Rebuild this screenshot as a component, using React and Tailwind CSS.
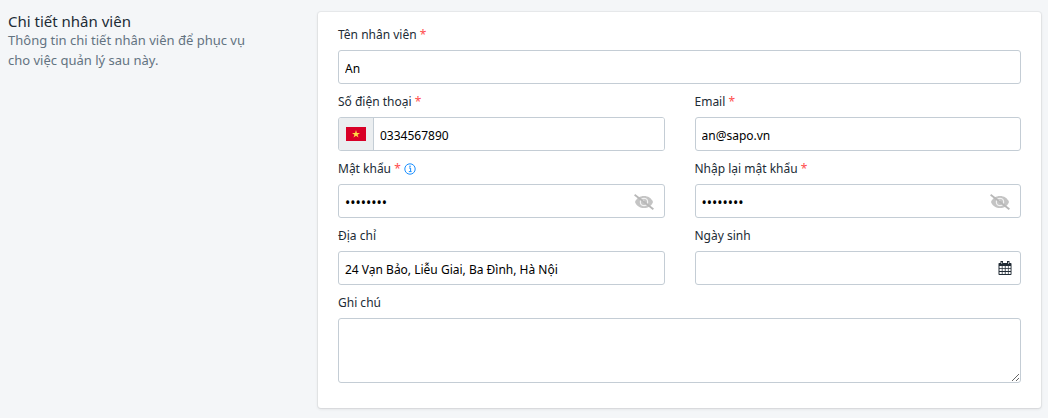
import { useState } from "react";

const inputClass =
  "block w-full h-[34px] rounded-[3px] border border-[#c4cdd5] bg-white px-1.5 pt-0.5 text-black outline-none focus:border-[#0088ff]";

function Field({ id, label, required, info, className = "", children }) {
  return (
    <div className={className}>
      <div className="mb-1.5 flex h-5 items-center gap-[3px] pt-0.5 text-xs leading-[18px] text-[#212b35]">
        <label htmlFor={id}>
          {label}
          {required && <span className="text-[#ff4d4d]"> *</span>}
        </label>
        {info && <InfoIcon />}
      </div>
      {children}
    </div>
  );
}

function InfoIcon() {
  return (
    <svg viewBox="0 0 12 12" className="size-3 shrink-0" aria-hidden="true">
      <circle cx="6" cy="6" r="5.2" fill="none" stroke="#1a8fff" strokeWidth="1" />
      <path d="M5 5h1.6v3.4M4.8 8.6h2.8" fill="none" stroke="#1a8fff" strokeWidth="1" />
      <circle cx="6" cy="3.2" r="0.8" fill="#1a8fff" />
    </svg>
  );
}

function EyeOffIcon() {
  return (
    <svg viewBox="0 0 20 16" className="h-4 w-5" aria-hidden="true">
      <path d="M1 8C2.6 4 6 2 10 2s7.4 2 9 6c-1.6 4-5 6-9 6S2.6 12 1 8z" fill="#c4c4c4" />
      <circle cx="10" cy="8" r="3.8" fill="none" stroke="#fff" strokeWidth="0.9" />
      <path d="M8.3 7.8a1.9 1.9 0 0 1 1.9-1.7" fill="none" stroke="#fff" strokeWidth="0.9" />
      <path d="M0.6 0.8 19.4 15.3" stroke="#b8b8b8" strokeWidth="1.8" />
    </svg>
  );
}

function CalendarIcon() {
  return (
    <svg viewBox="0 0 14 14" className="size-3.5" aria-hidden="true">
      <rect x="0.5" y="2" width="13" height="12" rx="0.8" fill="#212b35" />
      <path d="M2.5 0H5v3.5H2.5zM9 0h2.5v3.5H9z" fill="#212b35" />
      <path d="M3.5 1h.6v2h-.6zM10 1h.6v2H10z" fill="#fff" />
      <path
        d="M1.5 5h2.3v2.3H1.5zM4.5 5h2.3v2.3H4.5zM7.6 5h2.3v2.3H7.6zM10.6 5h2v2.3h-2zM1.5 8h2.3v2.1H1.5zM4.5 8h2.3v2.1H4.5zM7.6 8h2.3v2.1H7.6zM10.6 8h2v2.1h-2zM1.5 10.9h2.3V13H1.5zM4.5 10.9h2.3V13H4.5zM7.6 10.9h2.3V13H7.6zM10.6 10.9h2V13h-2z"
        fill="#fff"
      />
    </svg>
  );
}

function VietnamFlag() {
  return (
    <svg viewBox="0 0 20 14" className="h-3.5 w-5" role="img" aria-label="Việt Nam">
      <path d="M0 0h20v14H0z" fill="#d80027" />
      <path
        d="m10 3 .95 2.9H14l-2.45 1.8.95 2.9-2.5-1.8-2.5 1.8.95-2.9L6 5.9h3.05z"
        fill="#ffda44"
      />
    </svg>
  );
}

function PasswordInput({ id, value, onChange }) {
  const [visible, setVisible] = useState(false);

  return (
    <div className="relative">
      <input
        id={id}
        type={visible ? "text" : "password"}
        className={`${inputClass} pr-10 text-sm`}
        value={value}
        onChange={onChange}
      />
      <button
        type="button"
        aria-label="Hiện mật khẩu"
        className="absolute inset-y-0 right-[11px] flex items-center pt-0.5"
        onClick={() => setVisible(!visible)}
      >
        <EyeOffIcon />
      </button>
    </div>
  );
}

export default function App() {
  const [form, setForm] = useState({
    name: "An",
    phone: "0334567890",
    email: "an@sapo.vn",
    password: "12345678",
    confirm: "12345678",
    address: "24 Vạn Bảo, Liễu Giai, Ba Đình, Hà Nội",
    birthday: "",
    note: "",
  });

  const update = (key) => (e) => setForm({ ...form, [key]: e.target.value });

  return (
    <main className="flex min-h-screen items-start bg-[#f4f6f8] pt-3 pr-[7px] pb-2.5 pl-2 font-['Noto_Sans',sans-serif]">
      <div className="w-[310px] shrink-0 pr-14">
        <h2 className="text-[15px] leading-[18px] text-[#212b35]">Chi tiết nhân viên</h2>
        <p className="text-[13px] leading-5 text-[#637381]">
          Thông tin chi tiết nhân viên để phục vụ cho việc quản lý sau này.
        </p>
      </div>

      <form
        className="grid min-w-0 flex-1 grid-cols-2 gap-x-[30px] gap-y-[7px] rounded-[3px] bg-white px-5 pt-3 pb-[25px] shadow-[0_0_0_1px_rgba(63,63,68,0.05),0_1px_3px_0_rgba(63,63,68,0.15)]"
        onSubmit={(e) => e.preventDefault()}
      >
        <Field id="name" label="Tên nhân viên" required className="col-span-2">
          <input
            id="name"
            className={`${inputClass} text-xs`}
            value={form.name}
            onChange={update("name")}
          />
        </Field>

        <Field id="phone" label="Số điện thoại" required>
          <div className="flex h-[34px] overflow-hidden rounded-[3px] border border-[#c4cdd5]">
            <span className="flex w-[35px] shrink-0 items-center justify-center border-r border-[#c4cdd5] bg-[#ebeef0]">
              <VietnamFlag />
            </span>
            <input
              id="phone"
              type="tel"
              className="min-w-0 flex-1 bg-white px-1.5 pt-[3px] text-xs text-black outline-none"
              value={form.phone}
              onChange={update("phone")}
            />
          </div>
        </Field>
        <Field id="email" label="Email" required>
          <input
            id="email"
            type="email"
            className={`${inputClass} text-xs`}
            value={form.email}
            onChange={update("email")}
          />
        </Field>

        <Field id="password" label="Mật khẩu" required info>
          <PasswordInput id="password" value={form.password} onChange={update("password")} />
        </Field>
        <Field id="confirm" label="Nhập lại mật khẩu" required>
          <PasswordInput id="confirm" value={form.confirm} onChange={update("confirm")} />
        </Field>

        <Field id="address" label="Địa chỉ">
          <input
            id="address"
            className={`${inputClass} text-xs`}
            value={form.address}
            onChange={update("address")}
          />
        </Field>
        <Field id="birthday" label="Ngày sinh">
          <div className="relative">
            <input
              id="birthday"
              className={`${inputClass} pr-8 text-xs`}
              value={form.birthday}
              onChange={update("birthday")}
            />
            <button
              type="button"
              aria-label="Chọn ngày"
              className="absolute inset-y-0 right-[9px] flex items-center"
            >
              <CalendarIcon />
            </button>
          </div>
        </Field>

        <Field id="note" label="Ghi chú" className="col-span-2">
          <textarea
            id="note"
            className="block h-[65px] w-full resize rounded-[3px] border border-[#c4cdd5] bg-white px-1.5 py-1 text-xs text-black outline-none"
            value={form.note}
            onChange={update("note")}
          />
        </Field>
      </form>
    </main>
  );
}
